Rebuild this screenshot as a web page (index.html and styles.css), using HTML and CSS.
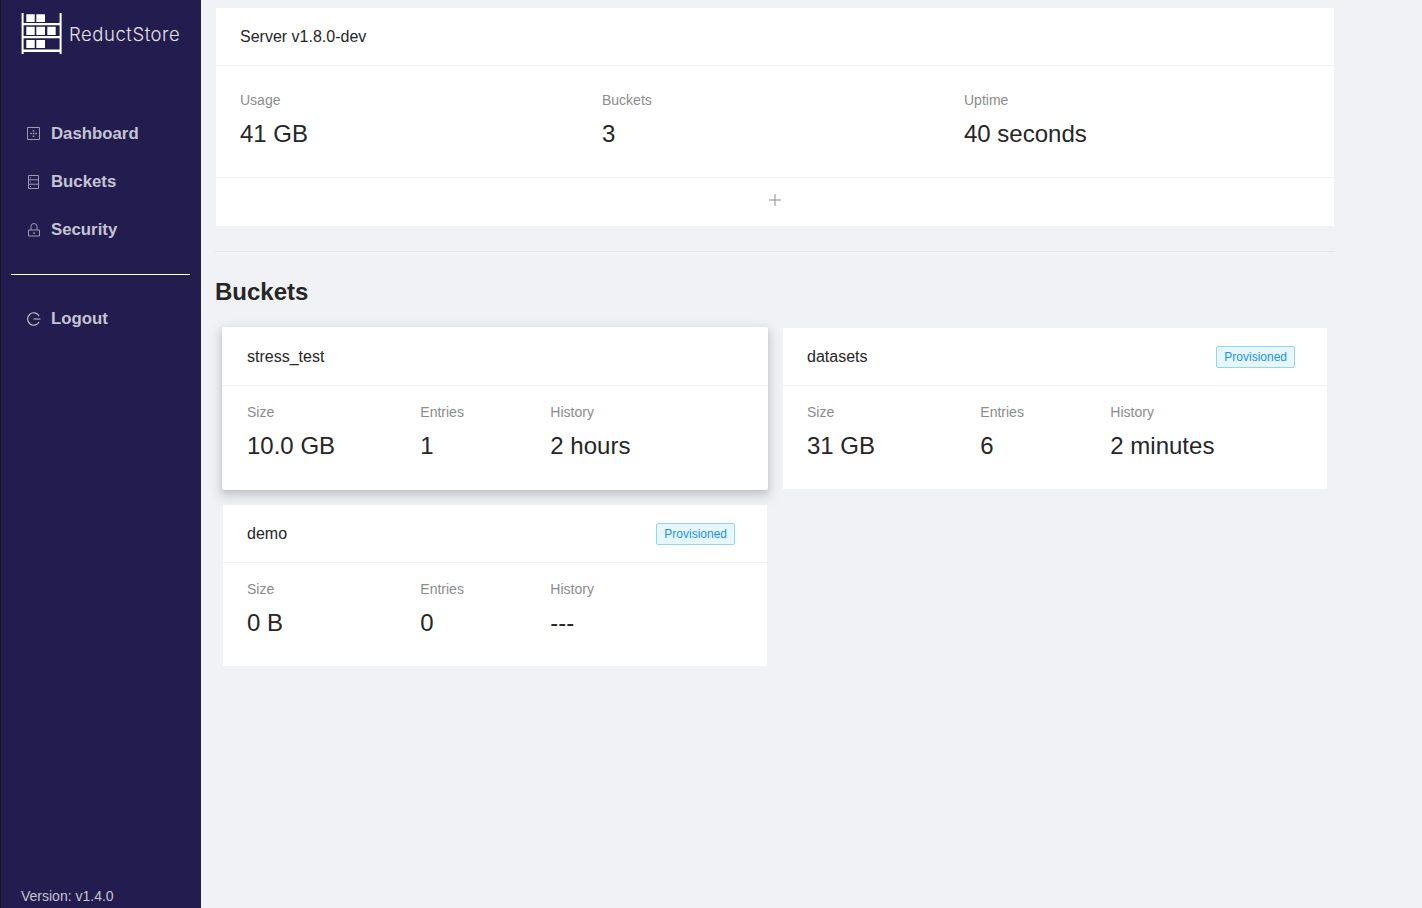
FILE: index.html
```html
<!DOCTYPE HTML>
<html>

<head>
    <title>ReductStore</title>
    <link rel="stylesheet" href="styles.css">
</head>

<body>
    <div class="layout">
        <aside class="sider">
            <div class="logo">
                <svg class="logo-mark" width="42" height="42" viewBox="0 0 42 42">
                    <path fill="#fff" d="M1.600 0h2v41h-2zM39.600 0h2v41h-2zM3 10h37v2.200H3zM3 23h37v2.200H3zM3 36.500h37v2.500H3z" />
                    <path fill="#fff" d="M6.300 1.200h8.400V9H6.300zM16.300 1.200H25V9h-8.700zM6.300 13.800h8.400V22H6.300zM16.300 13.800H25V22h-8.700zM27.300 13.800h8.400V22h-8.400zM6.300 27h8.400v8H6.300zM16.300 27H25v8h-8.700z" />
                </svg>
                <span class="logo-text">ReductStore</span>
            </div>
            <nav class="menu">
                <a class="menu-item">
                    <svg class="menu-icon" viewBox="0 0 14 14">
                        <path fill="none" stroke="currentColor" d="M0.500 0.500h12v12h-12z" />
                        <path fill="currentColor" d="M5.700 3h1.600v1.600H5.700zM3.200 5.700h1.600v1.600H3.200zM5.700 5.700h1.600v1.600H5.700zM8.200 5.700h1.600v1.600H8.200zM5.700 8.400h1.600V10H5.700z" />
                    </svg>
                    Dashboard
                </a>
                <a class="menu-item">
                    <svg class="menu-icon" viewBox="0 0 14 14">
                        <path fill="none" stroke="currentColor" d="M1.500 0.500h10v13h-10zM1.500 4.800h10M1.500 9.200h10" />
                        <path fill="currentColor" d="M3 2.200h1v1H3zM3 6.500h1v1H3zM3 10.900h1v1H3z" />
                    </svg>
                    Buckets
                </a>
                <a class="menu-item">
                    <svg class="menu-icon" viewBox="0 0 14 14">
                        <path fill="none" stroke="currentColor" d="M1.500 7h11v6h-11zM4 7V3.500a3 3 0 0 1 6 0V7" />
                        <path fill="currentColor" d="M6.200 9.200h1.600v1.600H6.200z" />
                    </svg>
                    Security
                </a>
            </nav>
            <div class="menu-divider"></div>
            <nav class="menu">
                <a class="menu-item">
                    <svg class="menu-icon logout-icon" viewBox="0 0 14 14">
                        <path fill="none" stroke="currentColor" stroke-width="1.100" d="M12.200 4A6.200 6.200 0 1 0 12.200 10M6.500 7h7" />
                    </svg>
                    Logout
                </a>
            </nav>
            <div class="version">Version: v1.4.0</div>
        </aside>

        <main class="content">
            <section class="card server-card">
                <div class="card-head">Server v1.8.0-dev</div>
                <div class="stats-row">
                    <div class="stat">
                        <div class="stat-label">Usage</div>
                        <div class="stat-value">41 GB</div>
                    </div>
                    <div class="stat">
                        <div class="stat-label">Buckets</div>
                        <div class="stat-value">3</div>
                    </div>
                    <div class="stat">
                        <div class="stat-label">Uptime</div>
                        <div class="stat-value">40 seconds</div>
                    </div>
                </div>
                <div class="card-actions">
                    <svg width="14" height="14" viewBox="0 0 14 14">
                        <path stroke="#8c8c8c" d="M7 1v12M1 7h12" />
                    </svg>
                </div>
            </section>

            <div class="divider"></div>
            <h2 class="section-title">Buckets</h2>

            <div class="bucket-grid">
                <section class="card bucket bucket-hover">
                    <div class="card-head">stress_test</div>
                    <div class="bucket-stats">
                        <div class="stat">
                            <div class="stat-label">Size</div>
                            <div class="stat-value">10.0 GB</div>
                        </div>
                        <div class="stat">
                            <div class="stat-label">Entries</div>
                            <div class="stat-value">1</div>
                        </div>
                        <div class="stat">
                            <div class="stat-label">History</div>
                            <div class="stat-value">2 hours</div>
                        </div>
                    </div>
                </section>
                <section class="card bucket">
                    <div class="card-head">datasets <span class="tag">Provisioned</span></div>
                    <div class="bucket-stats">
                        <div class="stat">
                            <div class="stat-label">Size</div>
                            <div class="stat-value">31 GB</div>
                        </div>
                        <div class="stat">
                            <div class="stat-label">Entries</div>
                            <div class="stat-value">6</div>
                        </div>
                        <div class="stat">
                            <div class="stat-label">History</div>
                            <div class="stat-value">2 minutes</div>
                        </div>
                    </div>
                </section>
                <section class="card bucket">
                    <div class="card-head">demo <span class="tag">Provisioned</span></div>
                    <div class="bucket-stats">
                        <div class="stat">
                            <div class="stat-label">Size</div>
                            <div class="stat-value">0 B</div>
                        </div>
                        <div class="stat">
                            <div class="stat-label">Entries</div>
                            <div class="stat-value">0</div>
                        </div>
                        <div class="stat">
                            <div class="stat-label">History</div>
                            <div class="stat-value">---</div>
                        </div>
                    </div>
                </section>
            </div>
        </main>
    </div>
</body>

</html>
```

FILE: styles.css
```css
* {
    box-sizing: border-box;
}

body {
    margin: 0;
    background: #f0f2f5;
    color: #262626;
    font-family: "Liberation Sans", Arial, sans-serif;
    font-size: 14px;
}

.layout {
    display: flex;
    height: 908px;
    overflow: hidden;
}

.sider {
    display: flex;
    flex-direction: column;
    flex: none;
    width: 201px;
    border-left: 1px solid #16121f;
    background: #231c4e;
    color: #c4c5d3;
}

.logo {
    display: flex;
    align-items: center;
    gap: 7px;
    height: 54px;
    padding: 13px 0 0 19px;
}

.logo-mark {
    flex: none;
}

.logo-text {
    color: #e4e3ea;
    font-family: "Inter", sans-serif;
    font-size: 18.500px;
    font-weight: 300;
    letter-spacing: 0.550px;
}

.menu {
    display: flex;
    flex-direction: column;
    gap: 8px;
}

.sider > .menu:nth-of-type(1) {
    margin-top: 60px;
}

.menu-item {
    display: flex;
    align-items: center;
    gap: 10px;
    height: 40px;
    padding-left: 26px;
    font-size: 16.800px;
    font-weight: bold;
}

.menu-icon {
    flex: none;
    width: 14px;
    height: 14px;
    opacity: 0.75;
}

.logout-icon {
    opacity: 1;
}

.menu-divider {
    height: 1px;
    margin: 24px 11px 24px 10px;
    background: #fff;
}

.version {
    margin-top: auto;
    padding: 0 0 4px 20px;
    line-height: 16px;
}

.content {
    flex: none;
    width: 1150px;
    padding: 8px 0 0 14px;
}

.card {
    background: #fff;
}

.server-card {
    width: 1118px;
    margin-left: 1px;
}

.card-head {
    display: flex;
    align-items: center;
    justify-content: space-between;
    height: 58px;
    padding: 0 32px 0 24px;
    border-bottom: 1px solid #f0f0f0;
    font-size: 16px;
}

.stats-row {
    display: grid;
    grid-template-columns: repeat(3, 362px);
    height: 112px;
    padding: 23px 0 0 24px;
    border-bottom: 1px solid #f0f0f0;
}

.stat-label {
    margin-bottom: 5px;
    color: #8c8c8c;
    line-height: 22px;
}

.stat-value {
    font-size: 24px;
    line-height: 36px;
}

.card-actions {
    display: flex;
    align-items: center;
    justify-content: center;
    height: 48px;
    padding-bottom: 4px;
}

.divider {
    width: 1120px;
    height: 1px;
    margin: 25px 0 24px;
    background: #e3e5ea;
}

.section-title {
    margin: 0 0 20px;
    font-size: 24px;
    line-height: 32px;
}

.bucket-grid {
    display: grid;
    grid-template-columns: 544px 544px;
    gap: 16px;
    padding-left: 8px;
}

.bucket {
    height: 161px;
}

.bucket-stats {
    display: grid;
    grid-template-columns: 173.330px 130px 1fr;
    padding: 15px 24px 0;
}

.bucket-hover {
    margin: -1px;
    height: 163px;
    border-radius: 2px;
    box-shadow: 0 1px 2px -2px rgba(0, 0, 0, 0.16), 0 3px 6px 0 rgba(0, 0, 0, 0.12), 0 5px 12px 4px rgba(0, 0, 0, 0.09);
}

.bucket-hover .card-head {
    height: 59px;
    padding-top: 2px;
    padding-left: 25px;
}

.bucket-hover .bucket-stats {
    padding-left: 25px;
}

.tag {
    padding: 0 7px;
    border: 1px solid #91d5ff;
    border-radius: 2px;
    background: #e6f7ff;
    color: #1890ff;
    font-size: 12px;
    line-height: 20px;
}
```
